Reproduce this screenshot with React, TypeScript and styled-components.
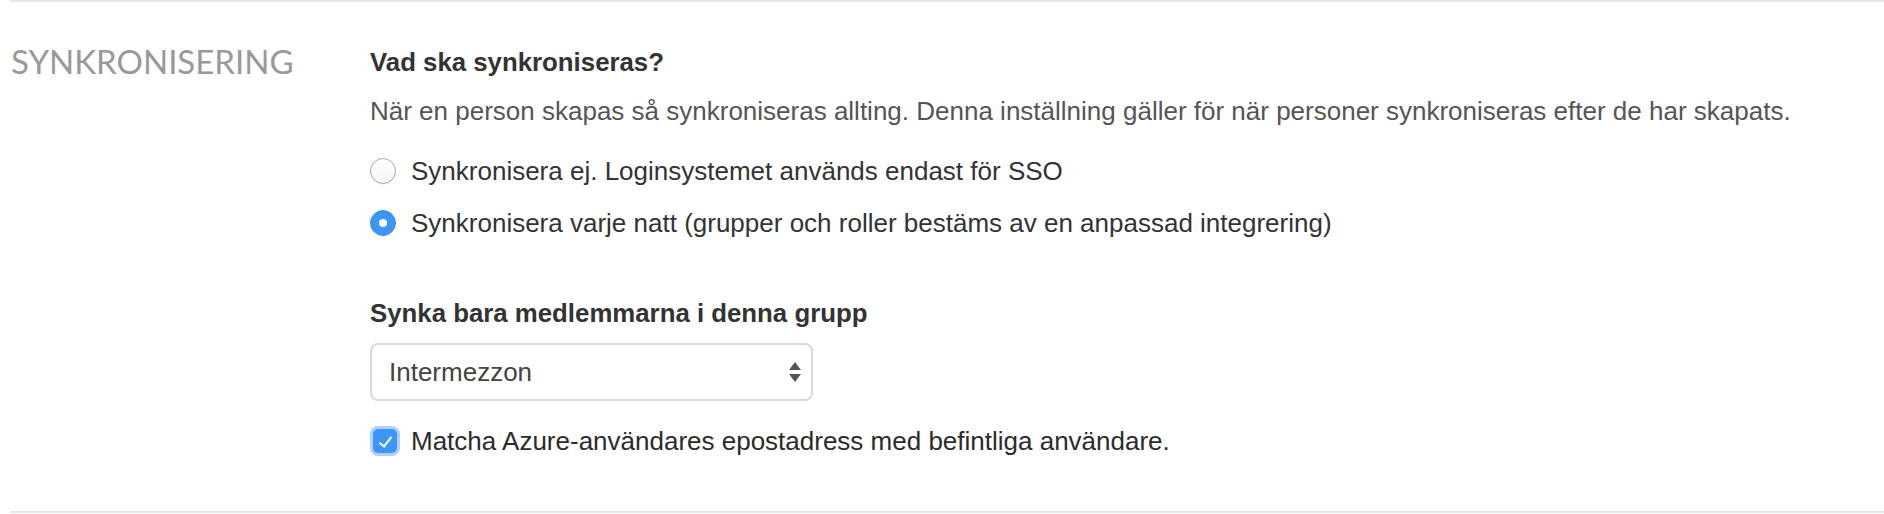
import React from "react";
import styled, { createGlobalStyle } from "styled-components";

const GlobalStyle = createGlobalStyle`
  html, body {
    margin: 0;
    padding: 0;
    background: #ffffff;
  }
  body {
    font-family: "Liberation Sans", Arial, Helvetica, sans-serif;
    -webkit-font-smoothing: antialiased;
  }
`;

const Page = styled.div`
  padding-left: 10px;
`;

const Section = styled.section`
  display: grid;
  grid-template-columns: 360px 1fr;
  border-top: 2px solid #e6e6e6;
  border-bottom: 2px solid #e6e6e6;
  padding: 40px 0 55px;
`;

const SectionTitle = styled.h2`
  margin: 0;
  padding-left: 1px;
  font-family: Lato, "Open Sans", sans-serif;
  font-weight: 400;
  font-size: 33px;
  line-height: 38px;
  color: #999999;
  letter-spacing: 0;
`;

const Body = styled.div`
  display: flex;
  flex-direction: column;
  padding-top: 5px;
`;

const Question = styled.h3<{ $gap?: number }>`
  margin: ${(p) => p.$gap ?? 0}px 0 0;
  font-size: 25.8px;
  line-height: 30px;
  font-weight: 700;
  color: #333333;
`;

const Help = styled.p`
  margin: 19px 0 0;
  font-size: 26px;
  line-height: 30px;
  color: #555555;
`;

const Options = styled.div`
  display: flex;
  flex-direction: column;
  gap: 22px;
  margin-top: 30px;
`;

const Choice = styled.label`
  display: flex;
  align-items: center;
  gap: 15px;
  font-size: 26px;
  line-height: 30px;
  color: #333333;
  cursor: pointer;
`;

const Radio = styled.input.attrs({ type: "radio" })`
  appearance: none;
  margin: 0;
  width: 26px;
  height: 26px;
  border-radius: 50%;
  border: 1px solid #a9a9a9;
  background: linear-gradient(#ffffff, #f6f6f6);
  box-shadow: 0 1px 1px rgba(0, 0, 0, 0.06);
  display: grid;
  place-items: center;
  flex: none;

  &:checked {
    border-color: #3a93f4;
    background: #3d96f6;
    box-shadow: none;
  }
  &:checked::after {
    content: "";
    width: 8px;
    height: 8px;
    border-radius: 50%;
    background: #ffffff;
  }
`;

const SelectWrap = styled.div`
  position: relative;
  width: 443px;
  margin-top: 15px;
`;

const Select = styled.select`
  appearance: none;
  display: block;
  width: 100%;
  height: 58px;
  margin: 0;
  padding: 0 40px 0 17px;
  border: 2px solid #d9d9d9;
  border-radius: 8px;
  background: #ffffff;
  font-family: "Liberation Sans", Arial, sans-serif;
  font-size: 26px;
  color: #444444;
  outline: none;
`;

const Arrows = styled.svg`
  position: absolute;
  right: 11px;
  top: 50%;
  transform: translateY(-50%);
  pointer-events: none;
`;

const CheckRow = styled.label`
  display: flex;
  align-items: center;
  gap: 14px;
  margin-top: 25px;
  font-size: 26px;
  line-height: 30px;
  color: #2b2b2b;
  cursor: pointer;
`;

const Checkbox = styled.input.attrs({ type: "checkbox" })`
  appearance: none;
  margin: 0 0 0 3px;
  width: 24px;
  height: 24px;
  border-radius: 5px;
  background: #3d96f6;
  box-shadow: 0 0 0 3px rgba(110, 170, 245, 0.55);
  display: grid;
  place-items: center;
  flex: none;

  &::after {
    content: "";
    width: 5px;
    height: 11px;
    border-right: 2px solid #ffffff;
    border-bottom: 2px solid #ffffff;
    transform: translateY(-1px) rotate(38deg);
  }
`;

export default function App() {
  return (
    <>
      <GlobalStyle />
      <Page>
        <Section>
          <SectionTitle>SYNKRONISERING</SectionTitle>
          <Body>
            <Question>Vad ska synkroniseras?</Question>
            <Help>
              När en person skapas så synkroniseras allting. Denna inställning
              gäller för när personer synkroniseras efter de har skapats.
            </Help>
            <Options>
              <Choice>
                <Radio name="sync" />
                Synkronisera ej. Loginsystemet används endast för SSO
              </Choice>
              <Choice>
                <Radio name="sync" defaultChecked />
                Synkronisera varje natt (grupper och roller bestäms av en
                anpassad integrering)
              </Choice>
            </Options>
            <Question $gap={60}>Synka bara medlemmarna i denna grupp</Question>
            <SelectWrap>
              <Select defaultValue="intermezzon">
                <option value="intermezzon">Intermezzon</option>
              </Select>
              <Arrows width="14" height="22" viewBox="0 0 14 22">
                <path d="M7 1 L13 9 L1 9 Z" fill="#555" />
                <path d="M7 21 L13 13 L1 13 Z" fill="#555" />
              </Arrows>
            </SelectWrap>
            <CheckRow>
              <Checkbox defaultChecked />
              Matcha Azure-användares epostadress med befintliga användare.
            </CheckRow>
          </Body>
        </Section>
      </Page>
    </>
  );
}
